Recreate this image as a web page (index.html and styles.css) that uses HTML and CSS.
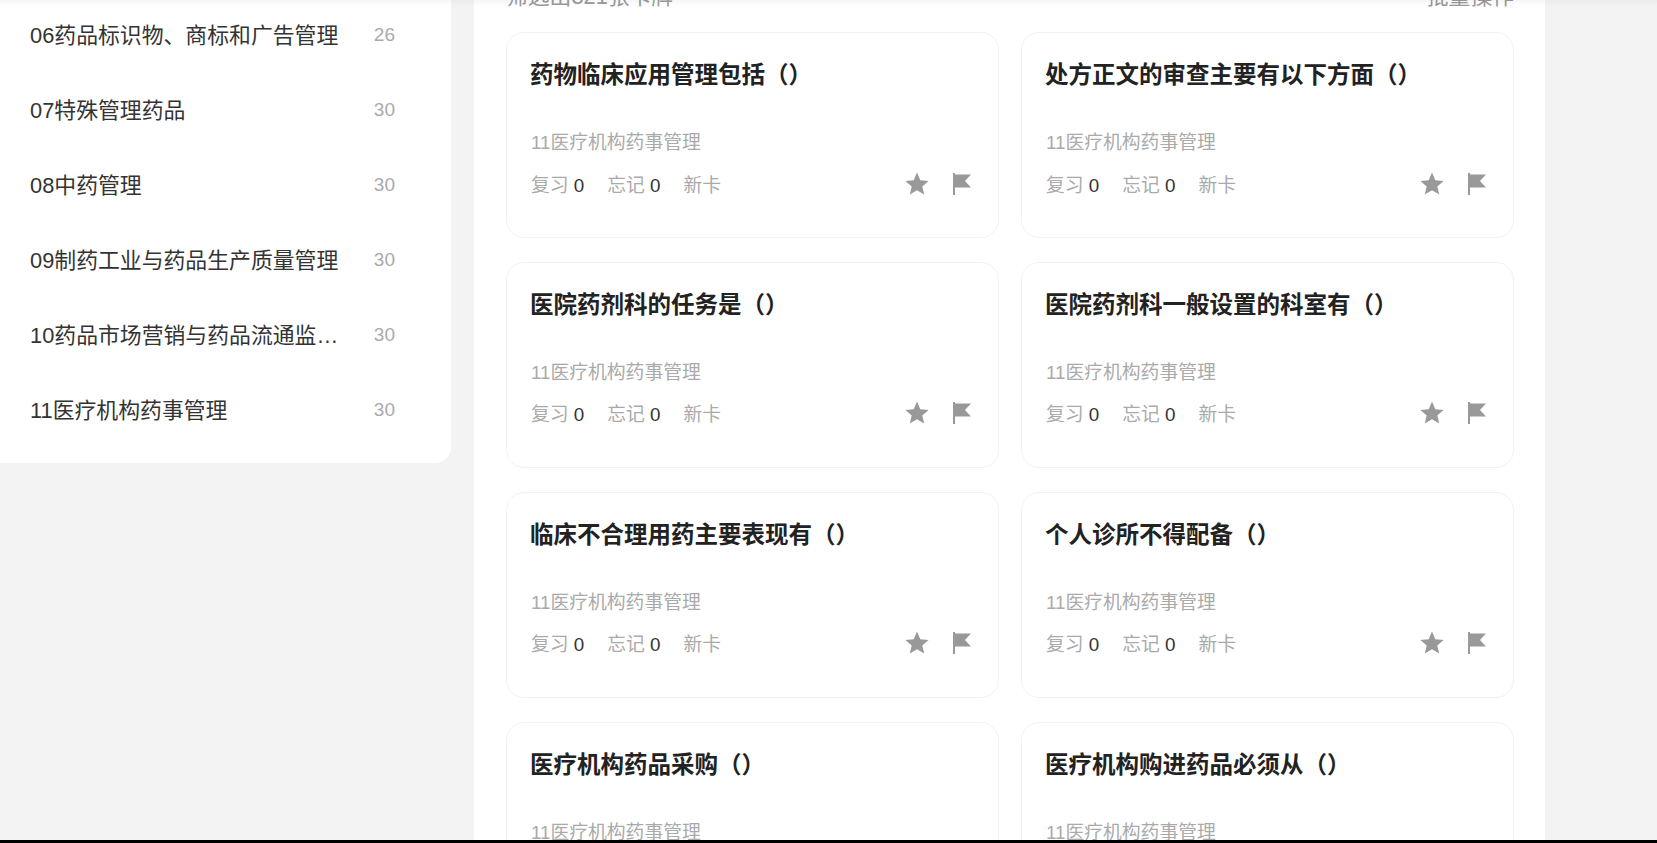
FILE: index.html
```html
<!DOCTYPE html>
<html lang="zh">
<head>
<meta charset="utf-8">
<title>卡牌</title>
<link rel="stylesheet" href="styles.css">
</head>
<body>
<div class="top-shadow"></div>
<div class="page">
  <aside class="sidebar">
    <div class="side-item"><span class="side-name">06药品标识物、商标和广告管理</span><span class="side-count">26</span></div>
    <div class="side-item"><span class="side-name">07特殊管理药品</span><span class="side-count">30</span></div>
    <div class="side-item"><span class="side-name">08中药管理</span><span class="side-count">30</span></div>
    <div class="side-item"><span class="side-name">09制药工业与药品生产质量管理</span><span class="side-count">30</span></div>
    <div class="side-item"><span class="side-name">10药品市场营销与药品流通监督管理</span><span class="side-count">30</span></div>
    <div class="side-item"><span class="side-name">11医疗机构药事管理</span><span class="side-count">30</span></div>
  </aside>
  <main class="panel">
    <div class="panel-head"><span>筛选出321张卡牌</span><span>批量操作</span></div>
    <div class="cards">
      <article class="card">
        <h3 class="card-title">药物临床应用管理包括（）</h3>
        <p class="card-tag">11医疗机构药事管理</p>
        <div class="card-foot">
          <span class="stat">复习 <b>0</b></span><span class="stat">忘记 <b>0</b></span><span class="stat">新卡</span>
          <span class="icons">
            <svg class="icon-star" viewBox="0 0 24 24"><path d="M12 .5L15.300 8.200 23.600 8.900 17.300 14.400 19.200 22.600 12 18.300 4.800 22.600 6.700 14.400 .4 8.900 8.700 8.200z"/></svg>
            <svg class="icon-flag" viewBox="0 0 18 22"><path d="M0 0h2v22H0zM2 1.500h16l-6 6.500 6 6.500H2z"/></svg>
          </span>
        </div>
      </article>
      <article class="card">
        <h3 class="card-title">处方正文的审查主要有以下方面（）</h3>
        <p class="card-tag">11医疗机构药事管理</p>
        <div class="card-foot">
          <span class="stat">复习 <b>0</b></span><span class="stat">忘记 <b>0</b></span><span class="stat">新卡</span>
          <span class="icons">
            <svg class="icon-star" viewBox="0 0 24 24"><path d="M12 .5L15.300 8.200 23.600 8.900 17.300 14.400 19.200 22.600 12 18.300 4.800 22.600 6.700 14.400 .4 8.900 8.700 8.200z"/></svg>
            <svg class="icon-flag" viewBox="0 0 18 22"><path d="M0 0h2v22H0zM2 1.500h16l-6 6.500 6 6.500H2z"/></svg>
          </span>
        </div>
      </article>
      <article class="card">
        <h3 class="card-title">医院药剂科的任务是（）</h3>
        <p class="card-tag">11医疗机构药事管理</p>
        <div class="card-foot">
          <span class="stat">复习 <b>0</b></span><span class="stat">忘记 <b>0</b></span><span class="stat">新卡</span>
          <span class="icons">
            <svg class="icon-star" viewBox="0 0 24 24"><path d="M12 .5L15.300 8.200 23.600 8.900 17.300 14.400 19.200 22.600 12 18.300 4.800 22.600 6.700 14.400 .4 8.900 8.700 8.200z"/></svg>
            <svg class="icon-flag" viewBox="0 0 18 22"><path d="M0 0h2v22H0zM2 1.500h16l-6 6.500 6 6.500H2z"/></svg>
          </span>
        </div>
      </article>
      <article class="card">
        <h3 class="card-title">医院药剂科一般设置的科室有（）</h3>
        <p class="card-tag">11医疗机构药事管理</p>
        <div class="card-foot">
          <span class="stat">复习 <b>0</b></span><span class="stat">忘记 <b>0</b></span><span class="stat">新卡</span>
          <span class="icons">
            <svg class="icon-star" viewBox="0 0 24 24"><path d="M12 .5L15.300 8.200 23.600 8.900 17.300 14.400 19.200 22.600 12 18.300 4.800 22.600 6.700 14.400 .4 8.900 8.700 8.200z"/></svg>
            <svg class="icon-flag" viewBox="0 0 18 22"><path d="M0 0h2v22H0zM2 1.500h16l-6 6.500 6 6.500H2z"/></svg>
          </span>
        </div>
      </article>
      <article class="card">
        <h3 class="card-title">临床不合理用药主要表现有（）</h3>
        <p class="card-tag">11医疗机构药事管理</p>
        <div class="card-foot">
          <span class="stat">复习 <b>0</b></span><span class="stat">忘记 <b>0</b></span><span class="stat">新卡</span>
          <span class="icons">
            <svg class="icon-star" viewBox="0 0 24 24"><path d="M12 .5L15.300 8.200 23.600 8.900 17.300 14.400 19.200 22.600 12 18.300 4.800 22.600 6.700 14.400 .4 8.900 8.700 8.200z"/></svg>
            <svg class="icon-flag" viewBox="0 0 18 22"><path d="M0 0h2v22H0zM2 1.500h16l-6 6.500 6 6.500H2z"/></svg>
          </span>
        </div>
      </article>
      <article class="card">
        <h3 class="card-title">个人诊所不得配备（）</h3>
        <p class="card-tag">11医疗机构药事管理</p>
        <div class="card-foot">
          <span class="stat">复习 <b>0</b></span><span class="stat">忘记 <b>0</b></span><span class="stat">新卡</span>
          <span class="icons">
            <svg class="icon-star" viewBox="0 0 24 24"><path d="M12 .5L15.300 8.200 23.600 8.900 17.300 14.400 19.200 22.600 12 18.300 4.800 22.600 6.700 14.400 .4 8.900 8.700 8.200z"/></svg>
            <svg class="icon-flag" viewBox="0 0 18 22"><path d="M0 0h2v22H0zM2 1.500h16l-6 6.500 6 6.500H2z"/></svg>
          </span>
        </div>
      </article>
      <article class="card">
        <h3 class="card-title">医疗机构药品采购（）</h3>
        <p class="card-tag">11医疗机构药事管理</p>
      </article>
      <article class="card">
        <h3 class="card-title">医疗机构购进药品必须从（）</h3>
        <p class="card-tag">11医疗机构药事管理</p>
      </article>
    </div>
  </main>
</div>
<div class="bottom-bar"></div>
</body>
</html>
```
FILE: styles.css
```css
* { box-sizing: border-box; }
html, body { margin: 0; height: 843px; overflow: hidden; }
body {
  background: #f3f3f3;
  font-family: "Liberation Sans", "Noto Sans CJK SC", sans-serif;
  color: #333;
  display: flex;
  flex-direction: column;
}
.top-shadow {
  position: absolute;
  top: 0;
  left: 0;
  right: 0;
  height: 6px;
  background: linear-gradient(rgba(0, 0, 0, .035), rgba(0, 0, 0, 0));
  z-index: 1;
}
.page {
  flex: 1;
  min-height: 0;
  overflow: hidden;
  display: flex;
  align-items: flex-start;
  gap: 23px;
}
.sidebar {
  width: 451px;
  margin-top: -4px;
  background: #fff;
  border-radius: 0 0 16px 0;
  padding: 0 0 17px 30px;
  flex: none;
}
.side-item {
  height: 75px;
  display: flex;
  align-items: center;
  justify-content: space-between;
  padding-right: 56px;
  font-size: 21.85px;
  color: #333;
}
.side-name {
  width: 312px;
  white-space: nowrap;
  overflow: hidden;
  text-overflow: ellipsis;
}
.side-count { font-size: 19px; color: #aaa; margin-top: 3px; }
.panel {
  width: 1071px;
  background: #fff;
  padding: 0 31px 0 32px;
  flex: none;
  height: 900px;
}
.panel-head {
  display: flex;
  justify-content: space-between;
  font-size: 21.8px;
  line-height: 24px;
  color: #999;
  margin-top: -15px;
  margin-bottom: 23px;
}
.cards {
  display: grid;
  grid-template-columns: 493px 493px;
  column-gap: 22px;
  row-gap: 23.6px;
}
.card {
  height: 206.4px;
  border: 1px solid #f2f2f2;
  border-radius: 18px;
  padding: 26px 24px 0 23px;
}
.card-title {
  margin: 0;
  font-size: 23.5px;
  line-height: 32px;
  font-weight: 700;
  color: #222;
}
.card-tag {
  margin: 38px 0 0 1px;
  font-size: 18.8px;
  line-height: 28px;
  color: #aaa;
}
.card-foot {
  display: flex;
  align-items: center;
  margin: 14.5px 0 0 1px;
  font-size: 18.8px;
  line-height: 28px;
  color: #aaa;
  gap: 23px;
}
.stat b { font-weight: 400; color: #333; }
.icons { margin-left: auto; margin-right: 3px; margin-bottom: 4px; display: flex; align-items: center; gap: 24px; }
.icon-star { width: 24px; height: 24px; fill: #999; }
.icon-flag { width: 18px; height: 22px; fill: #999; }
.bottom-bar { height: 3px; background: #000; flex: none; }
```
